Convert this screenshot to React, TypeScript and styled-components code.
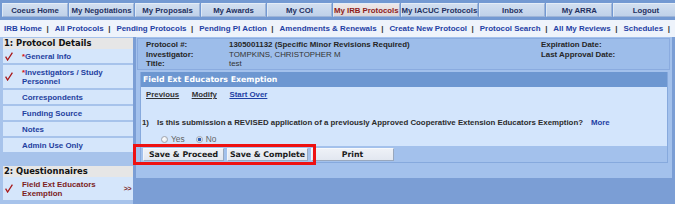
import React from 'react';
import styled, { createGlobalStyle } from 'styled-components';

const GlobalStyle = createGlobalStyle`
  html, body {
    margin: 0;
    padding: 0;
  }
  body {
    background: #7b9ed5;
    font-family: "Liberation Sans", Arial, sans-serif;
    overflow: hidden;
  }
`;

const Page = styled.div`
  position: relative;
  width: 675px;
  height: 204px;
  overflow: hidden;
  background: #7b9ed5;
`;

const Header = styled.div`
  background: #7399d2;
  padding: 3px 0 3px 2px;
`;

const TabRow = styled.div`
  display: flex;
  gap: 1px;
`;

const Tab = styled.div<{ $w: number; $active?: boolean }>`
  flex: 0 0 ${(p) => p.$w}px;
  height: 14px;
  box-sizing: border-box;
  display: flex;
  align-items: center;
  justify-content: center;
  white-space: nowrap;
  font-size: 7.8px;
  font-weight: bold;
  color: ${(p) => (p.$active ? '#8c1b1b' : '#1f3060')};
  background: ${(p) =>
    p.$active ? 'linear-gradient(#eee8e8, #dcd5d7)' : 'linear-gradient(#d2dff0, #bfd1e9)'};
  border-top: 1px solid #e4edf8;
  border-left: 1px solid #dde8f5;
  border-right: 1px solid #9db4d8;
  border-bottom: 1px solid #9db4d8;
`;

const LinkBar = styled.div`
  height: 17px;
  display: flex;
  align-items: center;
  padding-left: 4px;
  background: #eef3fb;
  font-size: 7.95px;
  font-weight: bold;
  white-space: nowrap;
`;

const NavLink = styled.span`
  color: #1e40a4;
`;

const Sep = styled.span`
  color: #333;
  margin: 0 6px 0 4.5px;
`;

const Body = styled.div`
  display: flex;
  align-items: flex-start;
`;

const Sidebar = styled.div`
  flex: 0 0 133px;
  height: 167px;
  box-sizing: border-box;
  padding: 1px 0 0 3px;
  margin-right: 3px;
  background: #a7c3eb;
`;

const SideHeading = styled.div<{ $top?: number }>`
  height: 11px;
  line-height: 11px;
  margin-top: ${(p) => p.$top ?? 0}px;
  padding-left: 1px;
  background: #e6e6e6;
  color: #111;
  font-family: "DejaVu Sans", Verdana, sans-serif;
  font-size: 8.4px;
  font-weight: bold;
  white-space: nowrap;
`;

const SideItem = styled.div<{ $first?: boolean; $current?: boolean }>`
  display: flex;
  align-items: center;
  margin-top: ${(p) => (p.$first ? 0 : 2)}px;
  padding: 2.5px 0;
  background: #d5e6fb;
  line-height: 9px;
  font-size: 7.9px;
  font-weight: bold;
  color: ${(p) => (p.$current ? '#7c1d1d' : '#1f3f9f')};
`;

const CheckSlot = styled.div`
  flex: 0 0 19px;
  box-sizing: border-box;
  padding-left: 2px;
  display: flex;
  align-items: center;
`;

const ItemText = styled.div`
  flex: 1;
`;

const Star = styled.span`
  color: #d41515;
`;

const Arrows = styled.div`
  padding-right: 2px;
  font-size: 7px;
  color: #7c1d1d;
  letter-spacing: -0.5px;
`;

const Main = styled.div`
  flex: 0 0 536px;
  box-sizing: border-box;
  padding: 1px 2px 15px 1px;
  background: #a3c1ec;
`;

const InfoBox = styled.div`
  display: grid;
  grid-template-columns: 83px 312px 1fr;
  padding: 1px 8px 0;
  background: #9dbdea;
  border: 1px solid #8aabdf;
  line-height: 9.7px;
  font-size: 7.9px;
  color: #262626;
  white-space: nowrap;
`;

const InfoLabel = styled.div`
  font-weight: bold;
`;

const InfoValue = styled.div<{ $bold?: boolean }>`
  font-weight: ${(p) => (p.$bold ? 'bold' : 'normal')};
  color: ${(p) => (p.$bold ? '#262626' : '#333')};
`;

const Panel = styled.div`
  margin: 2px 2px 0 3px;
  border: 1px solid #86a9dd;
  border-top: none;
`;

const PanelHeader = styled.div`
  height: 15px;
  line-height: 15px;
  padding-left: 2px;
  background: #6d97d1;
  color: #fff;
  font-family: "DejaVu Sans", Verdana, sans-serif;
  font-size: 7.8px;
  font-weight: bold;
`;

const PanelBody = styled.div`
  height: 59px;
  box-sizing: border-box;
  padding: 3px 0 2px 1px;
  background: #d3e5fc;
  font-size: 7.85px;
`;

const ActionRow = styled.div`
  display: flex;
  gap: 12.5px;
  margin-left: 4px;
  height: 10px;
  line-height: 10px;
  font-weight: bold;
`;

const ActionLink = styled.span<{ $fresh?: boolean }>`
  color: ${(p) => (p.$fresh ? '#1e40a4' : '#333')};
  text-decoration: underline;
`;

const QuestionRow = styled.div`
  display: flex;
  margin-top: 18px;
  height: 10px;
  line-height: 10px;
  font-weight: bold;
  color: #2b2b2b;
  white-space: nowrap;
`;

const QNum = styled.div`
  flex: 0 0 15px;
`;

const More = styled.span`
  margin-left: 8px;
  color: #1e40a4;
`;

const RadioRow = styled.div`
  display: flex;
  align-items: center;
  margin: 6px 0 0 19px;
  height: 10px;
  font-size: 8.4px;
  color: #666;
`;

const RadioDot = styled.span<{ $on?: boolean }>`
  width: 7px;
  height: 7px;
  box-sizing: border-box;
  border-radius: 50%;
  border: 1px solid #a2a6ad;
  background: ${(p) =>
    p.$on
      ? 'radial-gradient(circle, #2f5fb3 0 1.6px, #eef2f8 2.1px)'
      : 'radial-gradient(circle at 35% 35%, #ffffff, #dcdfe4)'};
  margin-right: 3px;
`;

const RadioLabel = styled.span`
  margin-right: 11px;
`;

const ButtonBar = styled.div`
  display: flex;
  gap: 3px;
  padding: 2px 2px 1px;
  background: #a3c1ec;
`;

const Btn = styled.div<{ $w: number }>`
  width: ${(p) => p.$w}px;
  height: 13px;
  box-sizing: border-box;
  display: flex;
  align-items: center;
  justify-content: center;
  background: linear-gradient(#eef1f7, #e2e7f0);
  border-top: 1px solid #f7f9fc;
  border-left: 1px solid #f2f5fa;
  border-right: 1px solid #98a7bd;
  border-bottom: 1px solid #98a7bd;
  font-family: "DejaVu Sans", Verdana, sans-serif;
  font-size: 7.8px;
  font-weight: bold;
  color: #1a1a1a;
  white-space: nowrap;
`;

const Highlight = styled.div`
  position: absolute;
  left: 133px;
  top: 144px;
  width: 183px;
  height: 21px;
  box-sizing: border-box;
  border: 3px solid #ee1111;
  pointer-events: none;
`;

const Check = () => (
  <svg width="8" height="9" viewBox="0 0 8 9">
    <path d="M0.6 4.6 L2.6 8 L7.4 0.6" fill="none" stroke="#a8191b" strokeWidth="1.3" />
  </svg>
);

const tabs: { label: string; w: number; active?: boolean }[] = [
  { label: 'Coeus Home', w: 66 },
  { label: 'My Negotiations', w: 65 },
  { label: 'My Proposals', w: 65 },
  { label: 'My Awards', w: 65 },
  { label: 'My COI', w: 65 },
  { label: 'My IRB Protocols', w: 64, active: true },
  { label: 'My IACUC Protocols', w: 74 },
  { label: 'Inbox', w: 66 },
  { label: 'My ARRA', w: 66 },
  { label: 'Logout', w: 65 },
];

const links = [
  'IRB Home',
  'All Protocols',
  'Pending Protocols',
  'Pending PI Action',
  'Amendments & Renewals',
  'Create New Protocol',
  'Protocol Search',
  'All My Reviews',
  'Schedules',
];

const App: React.FC = () => {
  return (
    <Page>
      <GlobalStyle />
      <Header>
        <TabRow>
          {tabs.map((t) => (
            <Tab key={t.label} $w={t.w} $active={t.active}>
              {t.label}
            </Tab>
          ))}
        </TabRow>
      </Header>

      <LinkBar>
        {links.map((l) => (
          <React.Fragment key={l}>
            <NavLink>{l}</NavLink>
            <Sep>|</Sep>
          </React.Fragment>
        ))}
      </LinkBar>

      <Body>
        <Sidebar>
          <SideHeading>1: Protocol Details</SideHeading>
          <SideItem $first>
            <CheckSlot><Check /></CheckSlot>
            <ItemText><Star>*</Star>General Info</ItemText>
          </SideItem>
          <SideItem>
            <CheckSlot><Check /></CheckSlot>
            <ItemText><Star>*</Star>Investigators / Study<br />Personnel</ItemText>
          </SideItem>
          <SideItem>
            <CheckSlot />
            <ItemText>Correspondents</ItemText>
          </SideItem>
          <SideItem>
            <CheckSlot />
            <ItemText>Funding Source</ItemText>
          </SideItem>
          <SideItem>
            <CheckSlot />
            <ItemText>Notes</ItemText>
          </SideItem>
          <SideItem>
            <CheckSlot />
            <ItemText>Admin Use Only</ItemText>
          </SideItem>

          <SideHeading $top={14}>2: Questionnaires</SideHeading>
          <SideItem $first $current>
            <CheckSlot><Check /></CheckSlot>
            <ItemText>Field Ext Educators<br />Exemption</ItemText>
            <Arrows>&gt;&gt;</Arrows>
          </SideItem>
        </Sidebar>

        <Main>
          <InfoBox>
            <InfoLabel>Protocol #:</InfoLabel>
            <InfoValue $bold>1305001132 (Specific Minor Revisions Required)</InfoValue>
            <InfoLabel>Expiration Date:</InfoLabel>
            <InfoLabel>Investigator:</InfoLabel>
            <InfoValue>TOMPKINS, CHRISTOPHER M</InfoValue>
            <InfoLabel>Last Approval Date:</InfoLabel>
            <InfoLabel>Title:</InfoLabel>
            <InfoValue>test</InfoValue>
            <div />
          </InfoBox>

          <Panel>
            <PanelHeader>Field Ext Educators Exemption</PanelHeader>
            <PanelBody>
              <ActionRow>
                <ActionLink>Previous</ActionLink>
                <ActionLink>Modify</ActionLink>
                <ActionLink $fresh>Start Over</ActionLink>
              </ActionRow>
              <QuestionRow>
                <QNum>1)</QNum>
                <span>
                  Is this submission a REVISED application of a previously Approved Cooperative
                  Extension Educators Exemption?
                </span>
                <More>More</More>
              </QuestionRow>
              <RadioRow>
                <RadioDot />
                <RadioLabel>Yes</RadioLabel>
                <RadioDot $on />
                <RadioLabel>No</RadioLabel>
              </RadioRow>
            </PanelBody>
            <ButtonBar>
              <Btn $w={81}>Save &amp; Proceed</Btn>
              <Btn $w={81}>Save &amp; Complete</Btn>
              <Btn $w={83}>Print</Btn>
            </ButtonBar>
          </Panel>
        </Main>
      </Body>

      <Highlight />
    </Page>
  );
};

export default App;
